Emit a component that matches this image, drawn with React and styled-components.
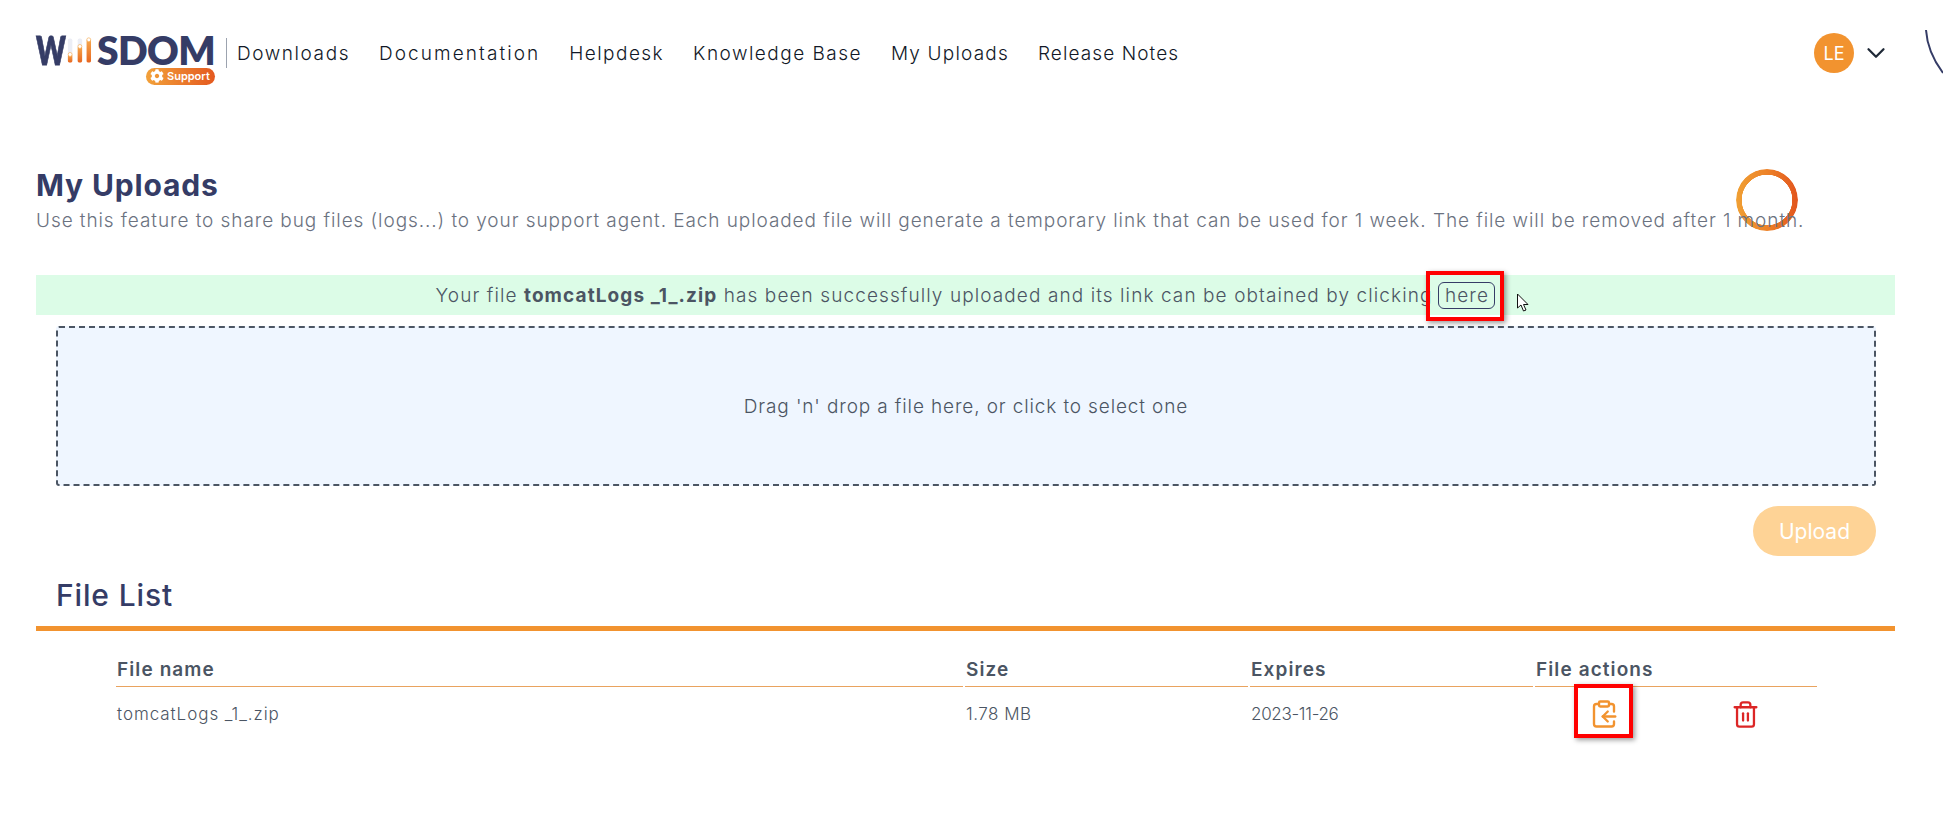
import React from 'react';
import styled, { createGlobalStyle } from 'styled-components';
import { ChevronDown, ClipboardCopy, Trash2 } from 'lucide-react';
import { FaCog } from 'react-icons/fa';

const Global = createGlobalStyle`
  html, body { margin: 0; padding: 0; background: #fff; }
  body { font-family: Inter, "Open Sans", sans-serif; color: #4b5563; }
  * { box-sizing: border-box; }
`;

const Page = styled.div`
  position: relative;
  width: 1943px;
  height: 821px;
  overflow: hidden;
`;

const Header = styled.header`
  display: flex;
  align-items: center;
  height: 106px;
  padding: 0 52px 0 36px;
`;

const Logo = styled.div`
  position: relative;
  width: 179px;
  height: 49px;
  margin-top: 14px;
`;

const LogoWord = styled.div`
  display: flex;
  align-items: center;
  height: 28px;
  font: 800 39px/28px Lato, sans-serif;
  color: #353c66;
  letter-spacing: -0.6px;
`;

const LogoW = styled.span`
  display: inline-block;
  width: 27px;
  transform: scaleX(0.72);
  transform-origin: left center;
  -webkit-text-stroke: 0.8px #353c66;
`;

const SupportBadge = styled.div`
  position: absolute;
  right: 0;
  bottom: 0;
  display: flex;
  align-items: center;
  gap: 3px;
  width: 69px;
  height: 17px;
  padding-left: 4px;
  border-radius: 9px;
  background: linear-gradient(90deg, #f2a13a, #e4591f);
  font: 600 11px/17px Inter, sans-serif;
  color: #fff;
`;

const Divider = styled.div`
  width: 1px;
  height: 30px;
  margin: 0 10px 0 11px;
  background: #9ca3af;
`;

const Nav = styled.nav`
  display: flex;
  gap: 29px;
  flex: 1;
`;

const NavLink = styled.a`
  font-size: 19px;
  font-weight: 300;
  letter-spacing: ${p => p.$spacing}px;
  color: #111827;
`;

const Avatar = styled.div`
  display: flex;
  align-items: center;
  justify-content: center;
  width: 40px;
  height: 40px;
  margin-right: 7px;
  border-radius: 50%;
  background: #f2932f;
  color: #fff;
  font-size: 18px;
  font-weight: 400;
`;

const Main = styled.main`
  padding: 0 48px 0 36px;
`;

const Title = styled.h1`
  margin: 62px 0 0;
  font-size: 30px;
  line-height: 34px;
  font-weight: 700;
  color: #353c66;
  letter-spacing: 0.85px;
`;

const Intro = styled.p`
  position: relative;
  z-index: 1;
  margin: 6px 0 0;
  font-size: 19px;
  line-height: 26px;
  font-weight: 300;
  color: #6b7280;
  white-space: nowrap;
  letter-spacing: 0.92px;
`;

const Notice = styled.div`
  display: flex;
  align-items: center;
  justify-content: center;
  gap: 6px;
  height: 40px;
  margin-top: 41px;
  background: #dcfce7;
  font-size: 19px;
  font-weight: 300;
  white-space: pre;
  letter-spacing: 1.09px;
  strong { font-weight: 700; }
`;

const HereButton = styled.span`
  display: inline-flex;
  align-items: center;
  justify-content: center;
  width: 57px;
  height: 27px;
  border: 1.5px solid #353c66;
  border-radius: 6px;
  font-size: 19px;
`;

const Highlight = styled.span`
  position: absolute;
  left: ${p => p.$left}px;
  top: ${p => p.$top}px;
  width: ${p => p.$width}px;
  height: ${p => p.$height}px;
  border: 4px solid #ff0000;
  box-shadow: 2px 2px 5px rgba(0, 0, 0, 0.4);
  pointer-events: none;
`;

const Cursor = styled.svg`
  position: absolute;
  left: 1516px;
  top: 293px;
`;

const DropZone = styled.div`
  display: flex;
  align-items: center;
  justify-content: center;
  height: 160px;
  margin: 11px 19px 0 20px;
  background: #eff6ff;
  border: 2px dashed #4b5563;
  border-radius: 3px;
  font-size: 19px;
  font-weight: 300;
  letter-spacing: 0.87px;
`;

const Actions = styled.div`
  display: flex;
  justify-content: flex-end;
  margin: 20px 19px 0 20px;
`;

const UploadButton = styled.button`
  width: 123px;
  height: 50px;
  border: 0;
  border-radius: 25px;
  background: #fed396;
  color: #fff;
  font: 400 21px Inter, sans-serif;
`;

const SectionTitle = styled.h2`
  margin: 21px 0 0;
  padding: 0 20px 12px;
  border-bottom: 5px solid #f2932f;
  font-size: 30px;
  line-height: 37px;
  font-weight: 500;
  color: #353c66;
  letter-spacing: 0.85px;
`;

const Table = styled.table`
  width: 1705px;
  margin: 26px 0 0 78px;
  border-collapse: separate;
  border-spacing: 2px 0;
  table-layout: fixed;
`;

const Th = styled.th`
  width: ${p => p.$width}px;
  height: 30px;
  padding: 2px 1px 0;
  border-bottom: 1px solid #e9a35f;
  text-align: left;
  vertical-align: top;
  font-size: 19px;
  line-height: 22px;
  font-weight: 600;
  color: #4b5563;
  letter-spacing: 1.1px;
`;

const Td = styled.td`
  height: 54px;
  padding: 0 1px;
  font-size: 17px;
  font-weight: 300;
  color: #4b5563;
  letter-spacing: ${p => p.$spacing}px;
`;

const IconRow = styled.div`
  display: flex;
  align-items: center;
  padding-left: 53px;
  gap: 112px;
`;

const IconButton = styled.span`
  display: flex;
  color: ${p => p.$color};
`;

const Spinner = styled.div`
  position: absolute;
  left: 1736px;
  top: 169px;
  width: 62px;
  height: 62px;
  border-radius: 50%;
  background: linear-gradient(90deg, #f0a034, #ed8228 50%, #e2551e);
  -webkit-mask: radial-gradient(circle, transparent 25px, #000 25.5px);
  mask: radial-gradient(circle, transparent 25px, #000 25.5px);
`;

const Arc = styled.svg`
  position: absolute;
  left: 1920px;
  top: 25px;
`;

const Bars = () => (
  <svg width="28" height="28" viewBox="0 0 28 28" style={{ margin: '0 5px 0 4px' }}>
    <defs>
      <linearGradient id="bar" x1="0" y1="0" x2="0" y2="1">
        <stop offset="0" stopColor="#f5a84e" />
        <stop offset="1" stopColor="#e8661f" />
      </linearGradient>
    </defs>
    <rect x="1" y="1" width="5" height="27" rx="2" fill="#eceef5" />
    <rect x="12" y="1" width="5" height="27" rx="2" fill="#eceef5" />
    <rect x="1" y="19" width="5" height="9" rx="1.5" fill="url(#bar)" />
    <rect x="12" y="10" width="5" height="18" rx="1.5" fill="url(#bar)" />
    <rect x="22" y="2" width="5" height="26" rx="1.5" fill="url(#bar)" />
    <circle cx="3.5" cy="19" r="2.2" fill="#fff" stroke="#f5a84e" strokeWidth="0.7" />
    <circle cx="14.5" cy="10" r="2.2" fill="#fff" stroke="#f5a84e" strokeWidth="0.7" />
    <circle cx="24.5" cy="2.5" r="2.2" fill="#fff" stroke="#f5a84e" strokeWidth="0.7" />
  </svg>
);

const links = [
  ['Downloads', 1.58],
  ['Documentation', 2.07],
  ['Helpdesk', 1.45],
  ['Knowledge Base', 1.48],
  ['My Uploads', 1.18],
  ['Release Notes', 1.1],
];

export default function App() {
  return (
    <Page>
      <Global />
      <Header>
        <Logo>
          <LogoWord><LogoW>W</LogoW><Bars />SDOM</LogoWord>
          <SupportBadge><FaCog size={14} />Support</SupportBadge>
        </Logo>
        <Divider />
        <Nav>
          {links.map(([label, spacing]) => <NavLink key={label} $spacing={spacing}>{label}</NavLink>)}
        </Nav>
        <Avatar>LE</Avatar>
        <ChevronDown size={30} strokeWidth={1.8} color="#1f2937" />
      </Header>
      <Main>
        <Title>My Uploads</Title>
        <Intro>Use this feature to share bug files (logs...) to your support agent. Each uploaded file will generate a temporary link that can be used for 1 week. The file will be removed after 1 month.</Intro>
        <Notice>
          <span>Your file <strong>tomcatLogs _1_.zip</strong> has been successfully uploaded and its link can be obtained by clicking</span>
          <HereButton>here</HereButton>
        </Notice>
        <DropZone>Drag 'n' drop a file here, or click to select one</DropZone>
        <Actions><UploadButton>Upload</UploadButton></Actions>
        <SectionTitle>File List</SectionTitle>
        <Table>
          <thead>
            <tr>
              <Th $width={847}>File name</Th>
              <Th $width={283}>Size</Th>
              <Th $width={283}>Expires</Th>
              <Th $width={282}>File actions</Th>
            </tr>
          </thead>
          <tbody>
            <tr>
              <Td $spacing={0.95}>tomcatLogs _1_.zip</Td>
              <Td $spacing={0.5}>1.78 MB</Td>
              <Td $spacing={-0.3}>2023-11-26</Td>
              <Td>
                <IconRow>
                  <IconButton $color="#f2932f"><ClipboardCopy size={30} strokeWidth={1.9} /></IconButton>
                  <IconButton $color="#dc2626"><Trash2 size={29} strokeWidth={1.9} /></IconButton>
                </IconRow>
              </Td>
            </tr>
          </tbody>
        </Table>
      </Main>
      <Spinner />
      <Arc width="23" height="50" viewBox="0 0 23 50" fill="none">
        <path d="M6 5 C7 20 14 36 23 48" stroke="#353c66" strokeWidth="2" />
      </Arc>
      <Highlight $left={1426} $top={271} $width={78} $height={50} />
      <Highlight $left={1574} $top={684} $width={59} $height={54} />
      <Cursor width="14" height="20" viewBox="0 0 14 20">
        <path d="M1.5 1 L1.5 15 L5 12 L7.5 18 L10 17 L7.5 11.5 L12 11.5 Z" fill="#fff" stroke="#111" strokeWidth="1" />
      </Cursor>
    </Page>
  );
}
